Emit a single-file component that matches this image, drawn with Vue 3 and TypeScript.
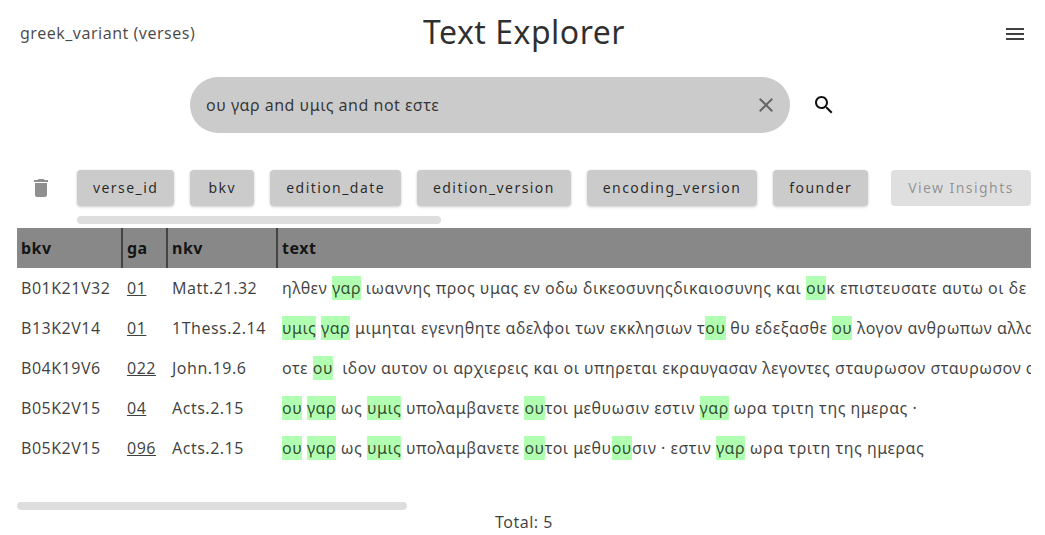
<template>
  <div class="page">
    <header class="top-bar">
      <div class="dataset">greek_variant (verses)</div>
      <h1 class="title">Text Explorer</h1>
      <button type="button" class="icon-btn menu-btn" aria-label="menu">
        <svg viewBox="0 0 24 24" class="icon"><path d="M3 18h18v-2H3v2zm0-5h18v-2H3v2zm0-7v2h18V6H3z" /></svg>
      </button>
    </header>

    <section class="search-row">
      <div class="search-pill">
        <input class="search-input" type="text" value="ου γαρ and υμις and not εστε" aria-label="search" />
        <button type="button" class="icon-btn clear-btn" aria-label="clear">
          <svg viewBox="0 0 24 24" class="icon"><path d="M19 6.41L17.59 5 12 10.59 6.41 5 5 6.41 10.59 12 5 17.59 6.41 19 12 13.41 17.59 19 19 17.59 13.41 12z" /></svg>
        </button>
      </div>
      <button type="button" class="icon-btn search-btn" aria-label="search">
        <svg viewBox="0 0 24 24" class="icon"><path d="M15.5 14h-.79l-.28-.27C15.41 12.59 16 11.11 16 9.5 16 5.91 13.09 3 9.5 3S3 5.91 3 9.5 5.91 16 9.5 16c1.61 0 3.09-.59 4.23-1.57l.27.28v.79l5 4.99L20.49 19l-4.99-5zm-6 0C7.01 14 5 11.99 5 9.5S7.01 5 9.5 5 14 7.01 14 9.5 11.99 14 9.5 14z" /></svg>
      </button>
    </section>

    <section class="toolbar">
      <button type="button" class="icon-btn trash-btn" aria-label="delete">
        <svg viewBox="0 0 24 24" class="icon"><path d="M6 19c0 1.1.9 2 2 2h8c1.1 0 2-.9 2-2V7H6v12zM19 4h-3.5l-1-1h-5l-1 1H5v2h14V4z" /></svg>
      </button>
      <div class="chips-col">
        <div class="chips">
          <button v-for="c in columns" :key="c" type="button" class="chip">{{ c }}</button>
        </div>
        <div class="thumb chips-thumb"></div>
      </div>
      <button type="button" class="insights" disabled>View Insights</button>
    </section>

    <section class="table">
      <div class="row head">
        <div class="cell">bkv</div>
        <div class="cell">ga</div>
        <div class="cell">nkv</div>
        <div class="cell">text</div>
      </div>
      <div v-for="r in rows" :key="r.ga + r.bkv" class="row">
        <div class="cell">{{ r.bkv }}</div>
        <div class="cell"><a class="ga-link">{{ r.ga }}</a></div>
        <div class="cell">{{ r.nkv }}</div>
        <div class="cell text-cell">
          <template v-for="(part, i) in split(r.text)" :key="i">
            <mark v-if="part.hit" class="hit">{{ part.s }}</mark>
            <span v-else>{{ part.s }}</span>
          </template>
        </div>
      </div>
    </section>

    <div class="thumb table-thumb"></div>
    <footer class="total">Total: {{ rows.length }}</footer>
  </div>
</template>

<script setup lang="ts">
interface Row {
  bkv: string;
  ga: string;
  nkv: string;
  text: string;
}

const columns = ["verse_id", "bkv", "edition_date", "edition_version", "encoding_version", "founder"];

// matches are wrapped in [ ]
const rows: Row[] = [
  {
    bkv: "B01K21V32",
    ga: "01",
    nkv: "Matt.21.32",
    text: "ηλθεν [γαρ] ιωαννης προς υμας εν οδω δικεοσυνηςδικαιοσυνης και [ου]κ επιστευσατε αυτω οι δε τελωναι και αι πορναι",
  },
  {
    bkv: "B13K2V14",
    ga: "01",
    nkv: "1Thess.2.14",
    text: "[υμις] [γαρ] μιμηται εγενηθητε αδελφοι των εκκλησιων τ[ου] θυ εδεξασθε [ου] λογον ανθρωπων αλλα καθως εστιν",
  },
  {
    bkv: "B04K19V6",
    ga: "022",
    nkv: "John.19.6",
    text: "οτε [ου]  ιδον αυτον οι αρχιερεις και οι υπηρεται εκραυγασαν λεγοντες σταυρωσον σταυρωσον αυτον λεγει αυτοις",
  },
  {
    bkv: "B05K2V15",
    ga: "04",
    nkv: "Acts.2.15",
    text: "[ου] [γαρ] ως [υμις] υπολαμβανετε [ου]τοι μεθυωσιν εστιν [γαρ] ωρα τριτη της ημερας ·",
  },
  {
    bkv: "B05K2V15",
    ga: "096",
    nkv: "Acts.2.15",
    text: "[ου] [γαρ] ως [υμις] υπολαμβανετε [ου]τοι μεθυ[ου]σιν · εστιν [γαρ] ωρα τριτη της ημερας",
  },
];

const split = (text: string) =>
  text
    .split(/(\[[^\]]+\])/)
    .filter((s) => s.length > 0)
    .map((s) => (s.startsWith("[") ? { s: s.slice(1, -1), hit: true } : { s, hit: false }));
</script>

<style>
html, body {
  margin:0; background:#fff; overflow:hidden;
}
</style>

<style scoped>
.page {
  width:1045px; height:535px; box-sizing:border-box; overflow:hidden;
  font-family:"Noto Sans", sans-serif; font-size:16px; color:rgba(0,0,0,.75);
  letter-spacing:.5px;
}

.top-bar {
  display:grid; grid-template-columns:1fr auto 1fr; align-items:center;
  height:65px; padding:0 18px 0 20px;
}

.dataset {
  font-size:16px; letter-spacing:.5px; color:rgba(0,0,0,.72);
}

.title {
  margin:0; font-size:32px; font-weight:400; letter-spacing:.5px; line-height:63px;
  padding:0 1px 2px 2px; color:rgba(0,0,0,.82);
}

.menu-btn {
  justify-self:end; color:#111; margin-top:3px;
}

.icon-btn {
  background:transparent; border:none; padding:0; width:24px; height:24px; cursor:pointer;
  display:flex; align-items:center; justify-content:center; color:inherit;
}

.icon {
  width:24px; height:24px; fill:currentColor; display:block;
}

.search-row {
  display:flex; align-items:center; gap:22px; margin-top:12px; padding-left:190px;
}

.search-pill {
  display:flex; align-items:center; width:600px; height:56px; box-sizing:border-box;
  background:#cbcbcb; border-radius:28px; padding:0 12px 0 16px;
}

.search-input {
  flex:1; min-width:0; border:none; outline:none; background:transparent; padding:0;
  font-family:inherit; font-size:16px; letter-spacing:.5px; color:rgba(0,0,0,.75);
}

.clear-btn {
  color:#666;
}

.search-btn {
  color:#111;
}

.toolbar {
  display:flex; align-items:flex-start; margin-top:37px; padding:0 14px 0 29px;
}

.trash-btn {
  color:#8f8f8f; margin:6px 24px 0 0;
}

.chips-col {
  display:flex; flex-direction:column; flex:1; min-width:0;
}

.chips {
  display:flex; gap:16px;
}

.chip {
  height:36px; min-width:64px; padding:0 16px 2px; border:none; border-radius:4px; background:#cbcbcb;
  font-family:inherit; font-size:14px; letter-spacing:1.43px; color:rgba(0,0,0,.82);
  box-shadow:0 1px 3px rgba(0,0,0,.2); cursor:pointer; white-space:nowrap;
}

.thumb {
  background:#dedede; border-radius:4px; height:8px;
}

.chips-thumb {
  width:364px; margin-top:10px;
}

.insights {
  height:36px; width:140px; flex:none; padding:0 0 2px; border:none; border-radius:4px; background:#dfdfdf;
  font-family:inherit; font-size:14px; letter-spacing:1.43px; color:rgba(0,0,0,.37);
}

.table {
  margin:4px 14px 0 17px; overflow:hidden;
}

.row {
  display:grid; grid-template-columns:105px 45px 110px minmax(0,1fr); height:40px; align-items:center;
}

.cell {
  padding-left:5px; white-space:pre; min-width:0;
}

.cell:first-child {
  padding-left:4px;
}

.head {
  background:#888; align-items:stretch; grid-template-columns:104px 45px 110px minmax(0,1fr);
}

.head .cell {
  display:flex; align-items:center; font-weight:700; color:rgba(0,0,0,.87);
  border-left:2px solid #444; padding-left:4px;
}

.head .cell:first-child {
  border-left:none; padding-left:4px;
}

.ga-link {
  text-decoration:underline;
}

.text-cell {
  overflow:hidden;
}

.hit {
  background:#b1ffb1; color:rgba(0,0,0,.72); display:inline-block; line-height:24px;
}

.table-thumb {
  width:390px; margin:34px 0 0 17px;
}

.total {
  text-align:center; margin-top:1px; line-height:22px; padding-left:3px;
}
</style>
